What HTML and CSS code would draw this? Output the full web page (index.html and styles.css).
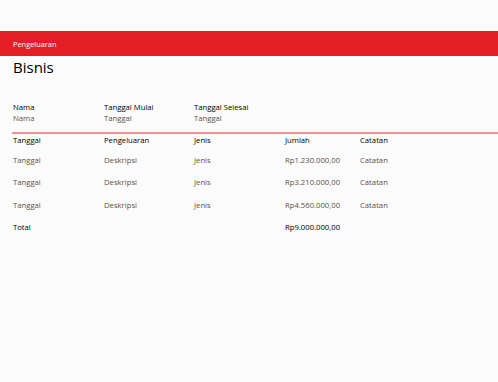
FILE: index.html
```html
<!DOCTYPE html>
<html lang="id">
<head>
<meta charset="utf-8">
<title>Pengeluaran Bisnis</title>
<link rel="stylesheet" href="styles.css">
</head>
<body>
<div class="page">
  <header class="bar"><span class="bar-title">Pengeluaran</span></header>
  <h1 class="title">Bisnis</h1>
  <section class="info">
    <div class="field"><div class="label">Nama</div><div class="value">Nama</div></div>
    <div class="field"><div class="label">Tanggal Mulai</div><div class="value">Tanggal</div></div>
    <div class="field"><div class="label">Tanggal Selesai</div><div class="value">Tanggal</div></div>
  </section>
  <table class="table">
    <colgroup><col class="c1"><col class="c2"><col class="c3"><col class="c4"><col class="c5"></colgroup>
    <thead>
      <tr><th>Tanggal</th><th>Pengeluaran</th><th>Jenis</th><th>Jumlah</th><th>Catatan</th></tr>
    </thead>
    <tbody>
      <tr><td>Tanggal</td><td>Deskripsi</td><td>Jenis</td><td>Rp1.230.000,00</td><td>Catatan</td></tr>
      <tr><td>Tanggal</td><td>Deskripsi</td><td>Jenis</td><td>Rp3.210.000,00</td><td>Catatan</td></tr>
      <tr><td>Tanggal</td><td>Deskripsi</td><td>Jenis</td><td>Rp4.560.000,00</td><td>Catatan</td></tr>
    </tbody>
    <tfoot>
      <tr><td>Total</td><td></td><td></td><td>Rp9.000.000,00</td><td></td></tr>
    </tfoot>
  </table>
</div>
</body>
</html>
```
FILE: styles.css
```css
html, body {
  margin: 0;
  padding: 0;
  background: #fbfbfb;
}
body {
  font-family: "Open Sans", "DejaVu Sans", sans-serif;
  font-size: 7.7px;
  color: #000;
}
.page {
  padding-top: 31px;
}
.bar {
  height: 25px;
  background: #e31e25;
  display: flex;
  align-items: center;
  padding-left: 13px;
}
.bar-title {
  color: #fff;
  font-size: 7.4px;
}
.title {
  margin: 0 0 0 13px;
  font-size: 15px;
  font-weight: normal;
  line-height: 22px;
  color: #000;
}
.info {
  display: grid;
  grid-template-columns: 91px 90px 91px;
  margin: 24px 0 0 13px;
}
.label, .value {
  line-height: 11px;
}
.label {
  color: #000;
}
.value {
  color: #5b5046;
}
.table {
  margin: 8px 0 0 12px;
  width: calc(100% - 12px);
  table-layout: fixed;
  border-collapse: collapse;
  border-top: 2px solid #f09496;
}
.c1 { width: 91px; }
.c2 { width: 90px; }
.c3 { width: 91px; }
.c4 { width: 75px; }
.table th, .table td {
  text-align: left;
  font-weight: normal;
  padding: 0 0 0 1px;
  height: 22.3px;
  vertical-align: middle;
  white-space: nowrap;
}
.table th {
  height: 14px;
  padding-top: 1px;
  vertical-align: top;
  color: #000;
}
.table tbody td {
  color: #5b5046;
}
.table tfoot td {
  color: #000;
}
```
